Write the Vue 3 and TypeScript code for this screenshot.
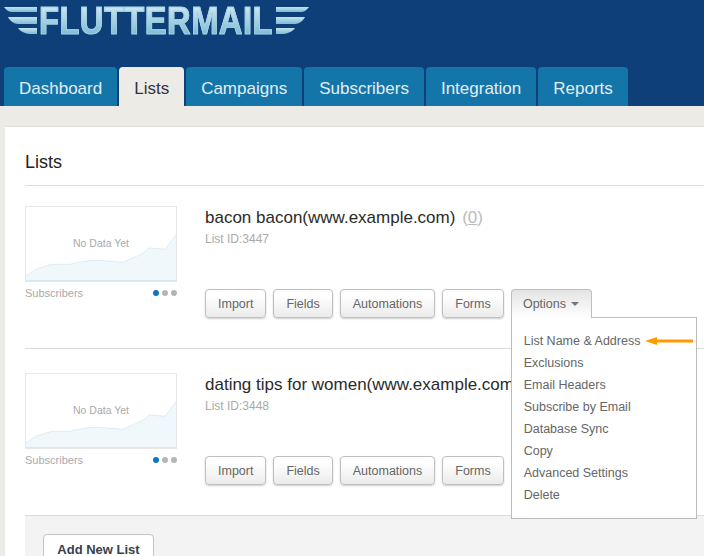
<script setup lang="ts">
const tabs = ['Dashboard', 'Lists', 'Campaigns', 'Subscribers', 'Integration', 'Reports']
const lists = [
  { name: 'bacon bacon(www.example.com)', id: 3447, count: true, open: true },
  { name: 'dating tips for women(www.example.com)', id: 3448, count: false, open: false },
]
const actions = ['Import', 'Fields', 'Automations', 'Forms']
const menu = ['List Name & Address', 'Exclusions', 'Email Headers', 'Subscribe by Email', 'Database Sync', 'Copy', 'Advanced Settings', 'Delete']
const curve = 'M1 70L11.700 63L26.700 58.300L45 58.300L53 56.300L65 54.700L73 54.300L85 55.300L98 56.300L118 47.300L124 42L140 43.300L151 29'
</script>

<template>
  <div class="page">
    <header class="top">
      <div class="logo">
        <svg class="wing" width="34" height="27" viewBox="0 0 34 27">
          <defs>
            <linearGradient id="wg" x1="0" y1="0" x2="0" y2="1">
              <stop offset="0" stop-color="#c4e3ee" />
              <stop offset="1" stop-color="#7fbcd6" />
            </linearGradient>
          </defs>
          <path fill="url(#wg)" d="M0 0H33V5H8C5 5 2 3 0 0Z" />
          <path fill="url(#wg)" d="M4 10H33V17H14C10 17 6 14 4 10Z" />
          <path fill="url(#wg)" d="M14 21H33V27H28C22 27 17 25 14 21Z" />
        </svg>
        <span class="logo-text">FLUTTERMAIL</span>
        <svg class="wing flip" width="34" height="27" viewBox="0 0 34 27">
          <path fill="url(#wg)" d="M0 0H33V5H8C5 5 2 3 0 0Z" />
          <path fill="url(#wg)" d="M4 10H33V17H14C10 17 6 14 4 10Z" />
          <path fill="url(#wg)" d="M14 21H33V27H28C22 27 17 25 14 21Z" />
        </svg>
      </div>
      <nav class="tabs">
        <a v-for="t in tabs" :key="t" class="tab" :class="{ active: t === 'Lists' }">{{ t }}</a>
      </nav>
    </header>

    <main class="main">
      <section class="panel">
        <h1 class="title">Lists</h1>
        <article v-for="l in lists" :key="l.id" class="row">
          <div class="stats">
            <div class="chart">
              <svg width="152" height="76" viewBox="0 0 152 76" class="chart-svg">
                <path fill="#f1f8fb" stroke="none" :d="curve + 'V75H1Z'" />
                <path fill="none" stroke="#dcedf6" stroke-width="1" :d="curve" />
                <rect x="0" y="74" width="152" height="2" fill="#d4e9f3" />
              </svg>
              <span class="nodata">No Data Yet</span>
            </div>
            <div class="caption">
              <span>Subscribers</span>
              <span class="dots"><i class="dot on"></i><i class="dot"></i><i class="dot"></i></span>
            </div>
          </div>
          <div class="info">
            <h2 class="name">{{ l.name }}<span v-if="l.count" class="count"> (<u>0</u>)</span></h2>
            <div class="listid">List ID:{{ l.id }}</div>
            <div class="actions">
              <button v-for="a in actions" :key="a" class="btn">{{ a }}</button>
              <div v-if="l.open" class="dropdown">
                <button class="btn opt">Options <i class="caret"></i></button>
                <ul class="menu">
                  <li v-for="(m, i) in menu" :key="m">
                    {{ m }}
                    <svg v-if="i === 0" class="arrow" width="48" height="10" viewBox="0 0 48 10">
                      <path fill="#ff9a00" d="M0 5L12 1V3.500H48V6.500H12V9Z" />
                    </svg>
                  </li>
                </ul>
              </div>
            </div>
          </div>
        </article>
        <footer class="foot">
          <button class="add">Add New List</button>
        </footer>
      </section>
    </main>
  </div>
</template>

<style>
html, body { margin: 0; background: #ecebe6; overflow: hidden; }
</style>

<style scoped>
.page {
  width: 704px;
  height: 556px;
  overflow: hidden;
  background: #ecebe6;
  font-family: "Liberation Sans", Arial, sans-serif;
}
.top {
  height: 106px;
  background: #0f3f78;
  position: relative;
  display: flex;
  flex-direction: column;
  justify-content: flex-end;
}
.logo {
  position: absolute;
  left: 4px;
  top: 7px;
  display: flex;
  align-items: flex-start;
}
.wing { display: block; }
.flip { transform: scaleX(-1); margin-left: 2px; }
.logo-text {
  display: block;
  font-weight: 700;
  font-size: 39px;
  line-height: 27px;
  height: 27px;
  letter-spacing: 0.5px;
  margin-left: 1px;
  margin-right: -44px;
  transform: scaleX(0.84);
  transform-origin: left center;
  background: linear-gradient(#c9e6f0, #7fbcd6);
  -webkit-background-clip: text;
  background-clip: text;
  color: transparent;
  -webkit-text-stroke: 1px #a6d1e3;
}
.tabs {
  display: flex;
  gap: 2px;
  padding-left: 4px;
}
.tab {
  height: 39px;
  line-height: 43px;
  padding: 0 15px;
  background: #1475a8;
  border-radius: 4px 4px 0 0;
  color: #e2eef5;
  font-size: 17px;
}
.tab.active {
  background: #ecebe6;
  color: #33333d;
}
.main {
  padding: 20px 0 0 5px;
}
.panel {
  background: #fff;
  border-top: 1px solid #dfded9;
  padding-left: 20px;
}
.title {
  margin: 0;
  height: 59px;
  box-sizing: border-box;
  border-bottom: 1px solid #dcdcdc;
  padding-top: 25px;
  font-size: 18px;
  line-height: 20px;
  font-weight: 400;
  color: #222;
}
.row {
  display: flex;
  height: 163px;
  padding-top: 20px;
  box-sizing: border-box;
  border-bottom: 1px solid #dcdcdc;
}
.row + .row { height: 167px; padding-top: 24px; }
.stats {
  width: 152px;
  margin-right: 28px;
  flex: none;
}
.chart {
  position: relative;
  width: 152px;
  height: 76px;
  box-sizing: border-box;
  border: 1px solid #e8e8e8;
  overflow: hidden;
}
.chart-svg {
  position: absolute;
  left: -1px;
  top: -1px;
}
.nodata {
  position: absolute;
  left: 0;
  right: 0;
  top: 30px;
  text-align: center;
  font-size: 10.500px;
  line-height: 12px;
  color: #aaa;
}
.caption {
  display: flex;
  justify-content: space-between;
  align-items: center;
  margin-top: 5px;
  font-size: 11px;
  line-height: 13px;
  color: #aaa;
}
.dots { display: flex; gap: 3px; margin-top: -1px; }
.dot {
  width: 6px;
  height: 6px;
  border-radius: 50%;
  background: #b5b5b5;
}
.dot.on { background: #0f75bc; }
.info { flex: 1; min-width: 0; }
.name {
  margin: 0;
  padding-top: 2px;
  font-size: 17px;
  line-height: 20px;
  font-weight: 400;
  color: #2b2b2b;
  white-space: nowrap;
}
.count { color: #bbb; margin-left: 2px; }
.listid {
  margin-top: 4px;
  font-size: 12px;
  line-height: 14px;
  color: #aaa;
}
.actions {
  display: flex;
  align-items: flex-start;
  gap: 7px;
  margin-top: 43px;
}
.btn {
  height: 29px;
  padding: 0 12px;
  box-sizing: border-box;
  border: 1px solid #bfbfbf;
  border-radius: 4px;
  background: linear-gradient(#fff 20%, #ebebeb);
  box-shadow: 0 1px 2px rgba(0, 0, 0, 0.2);
  font-family: inherit;
  font-size: 12.500px;
  color: #666;
}
.dropdown { position: relative; }
.opt {
  display: block;
  width: 81px;
  height: 29px;
  padding: 0;
  border-bottom: 0;
  border-radius: 4px 4px 0 0;
  box-shadow: none;
  background: linear-gradient(#e4e4e4, #fff);
  position: relative;
  z-index: 2;
}
.caret {
  display: inline-block;
  width: 0;
  height: 0;
  margin-left: 2px;
  vertical-align: 2px;
  border-left: 4px solid transparent;
  border-right: 4px solid transparent;
  border-top: 4px solid #777;
}
.menu {
  position: absolute;
  left: 0;
  top: 28px;
  width: 186px;
  height: 202px;
  margin: 0;
  padding: 12px 0 0 12px;
  box-sizing: border-box;
  list-style: none;
  background: #fff;
  border: 1px solid #bdbdbd;
  z-index: 1;
}
.menu li {
  position: relative;
  height: 22px;
  line-height: 22px;
  font-size: 12.500px;
  color: #666;
  white-space: nowrap;
}
.arrow {
  position: absolute;
  left: 121px;
  top: 6px;
}
.foot {
  height: 60px;
  padding: 18px 0 0 18px;
  background: #f3f3f3;
}
.add {
  width: 111px;
  height: 34px;
  padding: 0 0 4px;
  box-sizing: border-box;
  border: 1px solid #c4c4c4;
  border-radius: 4px;
  background: #fff;
  font-family: inherit;
  font-size: 13px;
  font-weight: 700;
  color: #3a3f4a;
}
</style>
